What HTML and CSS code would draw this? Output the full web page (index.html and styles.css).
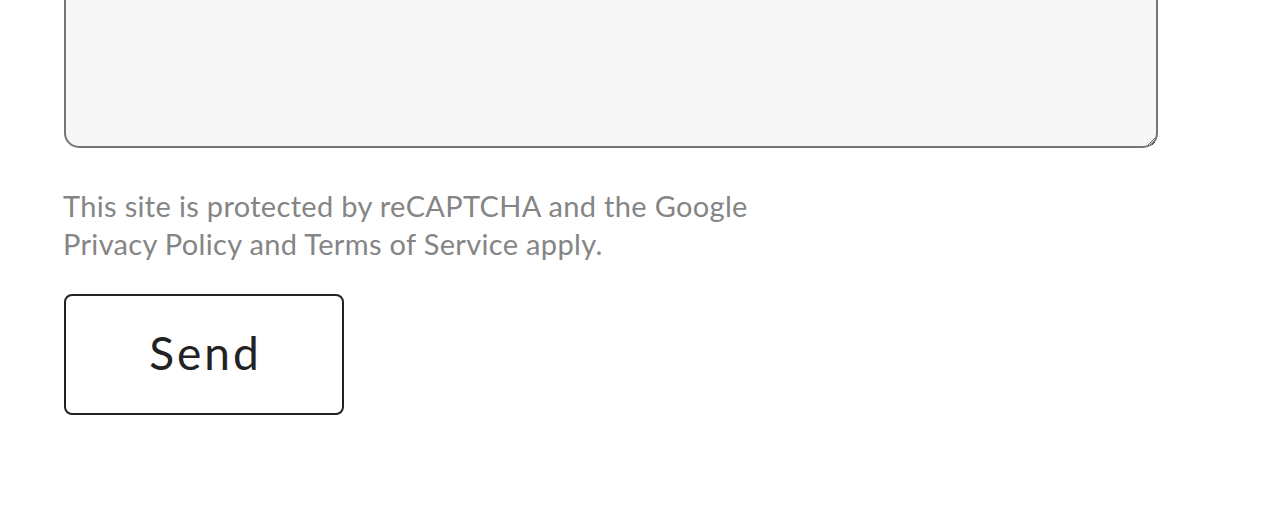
FILE: index.html
```html
<!DOCTYPE html>
<html>
<head>
<meta charset="utf-8">
<link rel="stylesheet" href="styles.css">
</head>
<body>
<form class="form">
  <textarea class="message"></textarea>
  <p class="notice">This site is protected by reCAPTCHA and the Google<br>Privacy Policy and Terms of Service apply.</p>
  <button type="button" class="send">Send</button>
</form>
</body>
</html>
```
FILE: styles.css
```css
html, body {
  margin: 0;
  padding: 0;
  background: #ffffff;
}
.form {
  display: flex;
  flex-direction: column;
  align-items: flex-start;
  padding-left: 64px;
  margin-top: -60px;
  font-family: "Lato", "Open Sans", sans-serif;
}
.message {
  box-sizing: border-box;
  width: 1094px;
  height: 208px;
  margin: 0;
  background: #f7f7f7;
  border: 2px solid #757575;
  border-radius: 15px;
  font-family: inherit;
}
.notice {
  margin: 39px 0 0 -1px;
  font-size: 29px;
  font-weight: 400;
  line-height: 38px;
  color: #858585;
  letter-spacing: 0.33px;
}
.send {
  box-sizing: border-box;
  margin-top: 31px;
  width: 280px;
  height: 121px;
  background: #ffffff;
  border: 2px solid #222222;
  border-radius: 8px;
  font-family: inherit;
  font-size: 46px;
  font-weight: 400;
  color: #222222;
  letter-spacing: 3px;
  padding: 0 0 4px 3px;
}
```
